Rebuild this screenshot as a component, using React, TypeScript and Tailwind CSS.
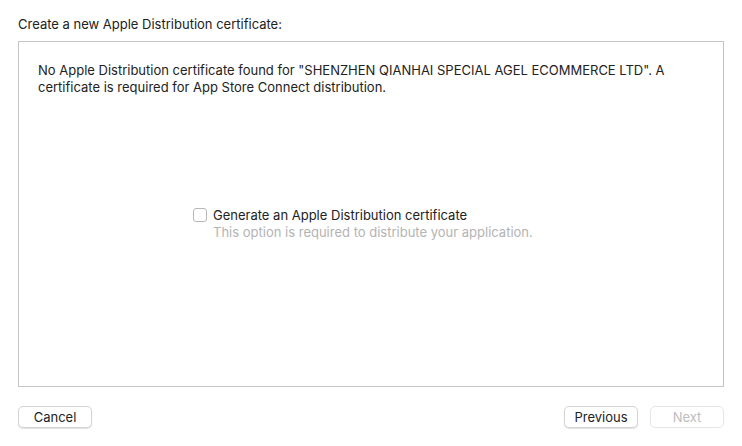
import React, { useState } from "react";

export default function App() {
  const [checked, setChecked] = useState(false);

  return (
    <div
      className="w-[742px] h-[446px] bg-white text-[13px] text-[#222222] flex flex-col px-[18px] pt-[15px]"
      style={{ fontFamily: "Inter, 'Liberation Sans', sans-serif" }}
    >
      <div className="h-[18px] leading-[18px]">Create a new Apple Distribution certificate:</div>

      {/* Content box */}
      <div className="mt-[8px] h-[346px] border border-[#c4c4c4] flex flex-col px-[19px] pt-[20px]">
        <p className="leading-[17px]">
          No Apple Distribution certificate found for "SHENZHEN QIANHAI SPECIAL AGEL ECOMMERCE LTD". A
          <br />
          certificate is required for App Store Connect distribution.
        </p>

        <div className="mt-[110px] ml-[155px] flex flex-col">
          <label className="flex items-center gap-[6px] h-[18px] cursor-default">
            <span
              onClick={() => setChecked(!checked)}
              className="w-[14px] h-[14px] rounded-[3px] border border-[#b8b8b8] bg-white flex items-center justify-center"
            >
              {checked && (
                <svg width="10" height="10" viewBox="0 0 10 10">
                  <path d="M2 5.2l2 2 4-4.5" stroke="#222222" strokeWidth="1.5" fill="none" />
                </svg>
              )}
            </span>
            <span className="leading-[18px]">Generate an Apple Distribution certificate</span>
          </label>
          <div className="ml-[20px] leading-[17px] text-[#b3b3b3]">
            This option is required to distribute your application.
          </div>
        </div>
      </div>

      {/* Footer buttons */}
      <div className="mt-[19px] flex items-center">
        <button className="w-[74px] h-[22px] rounded-[5px] bg-white border border-[#d4d4d4] shadow-[0_1px_1px_rgba(0,0,0,0.12)] text-[#222222] leading-none">
          Cancel
        </button>
        <div className="flex-1" />
        <button className="w-[74px] h-[22px] rounded-[5px] bg-white border border-[#d4d4d4] shadow-[0_1px_1px_rgba(0,0,0,0.12)] text-[#222222] leading-none">
          Previous
        </button>
        <button
          disabled
          className="ml-[12px] w-[74px] h-[22px] rounded-[5px] bg-white border border-[#e6e6e6] text-[#bdbdbd] leading-none"
        >
          Next
        </button>
      </div>
    </div>
  );
}
